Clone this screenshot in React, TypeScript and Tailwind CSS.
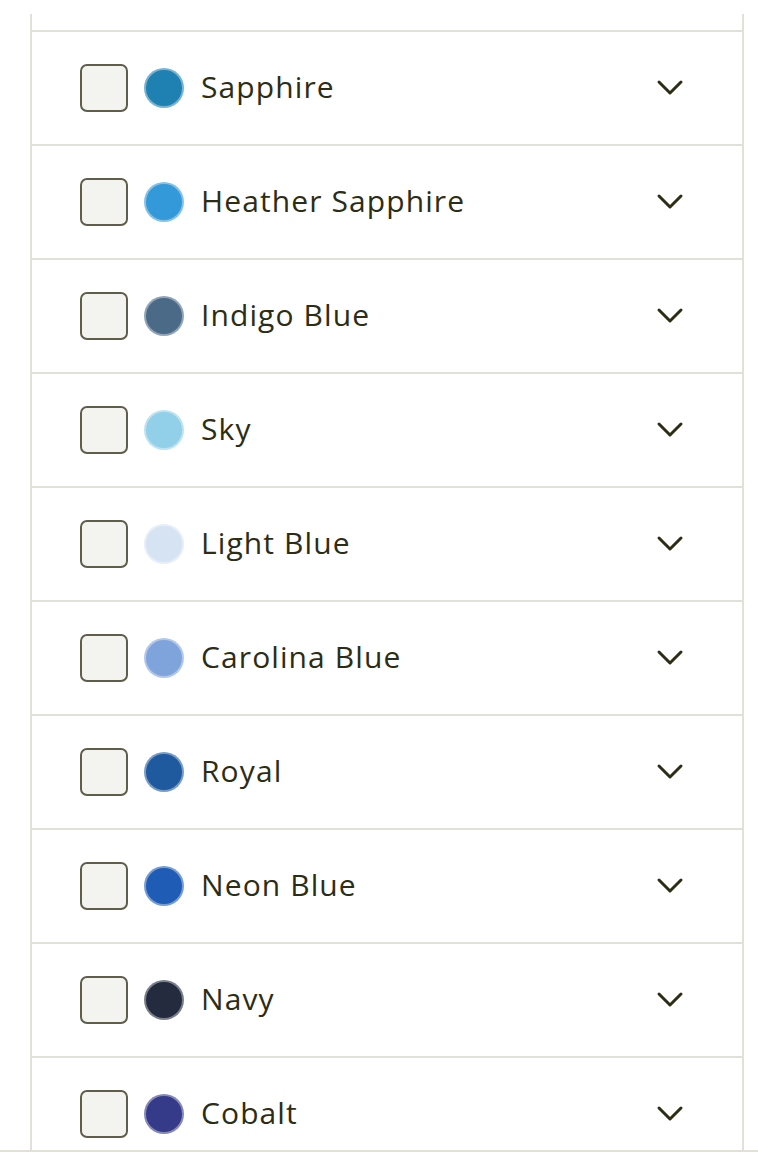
import React from "react";

const colors: { name: string; color: string }[] = [
  { name: "Sapphire", color: "#1f80b2" },
  { name: "Heather Sapphire", color: "#3399d8" },
  { name: "Indigo Blue", color: "#4a6a88" },
  { name: "Sky", color: "#92cfe8" },
  { name: "Light Blue", color: "#d6e3f2" },
  { name: "Carolina Blue", color: "#7fa4dc" },
  { name: "Royal", color: "#1f5a9e" },
  { name: "Neon Blue", color: "#1e5cb5" },
  { name: "Navy", color: "#242b3e" },
  { name: "Cobalt", color: "#353b88" },
];

function Chevron() {
  return (
    <svg width="28" height="18" viewBox="0 0 28 18" fill="none">
      <polyline
        points="3,3 14,14 25,3"
        stroke="#2c2d14"
        strokeWidth="3"
        strokeLinecap="round"
        strokeLinejoin="round"
      />
    </svg>
  );
}

export default function App() {
  return (
    <div className="h-[1152px] w-[758px] overflow-hidden bg-white flex flex-col" style={{ fontFamily: "'Open Sans', 'Noto Sans', sans-serif" }}>
      <div className="flex-1 overflow-hidden pt-[14px]">
        <div className="ml-[30px] w-[714px] border-x-2 border-[#e1e1da]">
          <div className="h-[16px]" />
          {colors.map((c) => (
            <div key={c.name} className="h-[114px] border-t-2 border-[#e1e1da] flex items-center pl-[48px] pr-[58px]">
              <div className="w-[48px] h-[48px] rounded-[7px] border-2 border-[#5f5e4a] bg-[#f3f4ef] shrink-0" />
              <div
                className="ml-[16px] w-[40px] h-[40px] rounded-full shrink-0 border-2 border-white/40"
                style={{ backgroundColor: c.color }}
              />
              <span className="ml-[17px] text-[30px] leading-[38px] pb-[3px] text-[#2c2d14] tracking-[1.1px] flex-1">{c.name}</span>
              <Chevron />
            </div>
          ))}
        </div>
      </div>
      <div className="h-[2px] bg-[#e1e1da] shrink-0" />
    </div>
  );
}
